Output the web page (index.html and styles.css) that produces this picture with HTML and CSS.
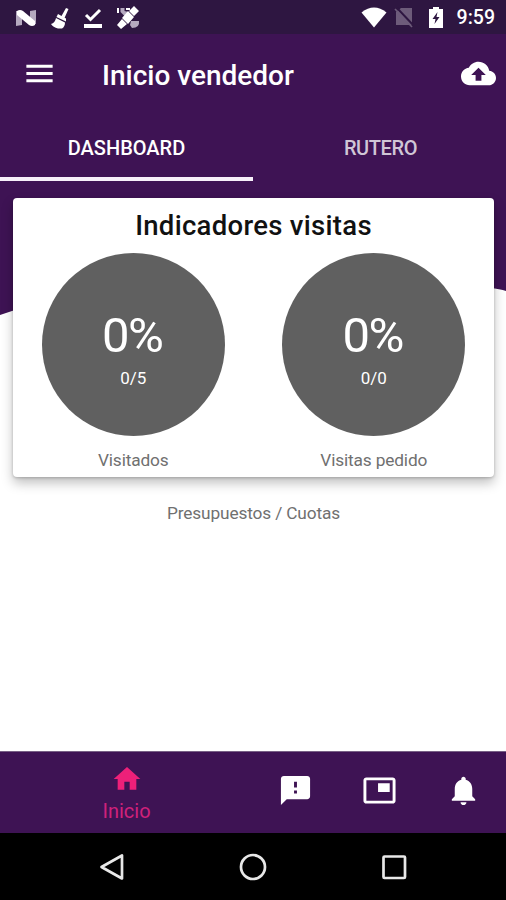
FILE: index.html
```html
<!DOCTYPE html>
<html lang="es">
<head>
    <meta charset="UTF-8">
    <meta name="viewport" content="width=device-width, initial-scale=1.0">
    <title>Inicio vendedor</title>
    <link rel="stylesheet" href="styles.css">
</head>
<body>
    <div class="status-bar">
        <div class="status-left">
            <svg width="22" height="20" viewBox="0 0 22 20"><path fill="#b5a9bf" d="M1 3h6v14l-6 1zM15 3l6-1v14l-6 1z"/><path fill="#fff" d="M2 3q3-2 6 0l12 10v4q-3 2-6 0L2 7z"/></svg>
            <svg width="20" height="22" viewBox="0 0 20 22"><path fill="#fff" d="M16 1l2.500 1-4 9-3-2zM8 7l8 4.500v3L6.500 10zM6 11l9 4.500q0 4-3 6H8Q3 20 1 17q4-1 5-6z"/></svg>
            <svg width="20" height="22" viewBox="0 0 20 22"><path fill="none" stroke="#fff" stroke-width="3" d="M3 8l4.500 4.500L17 3"/><path fill="#fff" d="M1 17h18v4H1z"/></svg>
            <svg width="24" height="24" viewBox="0 0 24 24"><path fill="#b5a9bf" d="M4.500 2h4v3l4 1-4 4-4-4zM15 15l8 0q1 7-7 7l-2-3z"/><path fill="#fff" d="M1 2h2v5H1zM10 2h4v2h-4zM18 0l5 5-5 5-5-5zM12 5l6 6-6 7-6-6zM6 13l5 5-6 5-4-4z"/></svg>
        </div>
        <div class="status-right">
            <svg width="26" height="21" viewBox="0 0 26 21"><path fill="#fff" d="M0.500 5.500Q13-4.500 25.500 5.500L13 20.500z"/></svg>
            <svg class="no-sim" width="20" height="21" viewBox="0 0 20 21"><path fill="#6d5b7a" d="M7 1h11v17H2V5z"/><path stroke="#2e1641" stroke-width="2" d="M3 1l17 18"/><path stroke="#6d5b7a" stroke-width="1.700" d="M1 2l17 18"/></svg>
            <svg width="16" height="21" viewBox="0 0 16 21"><path fill="#fff" fill-rule="evenodd" d="M5 0h6v2h4v19H1V2h4zM9.500 5l-5 7h3L6.500 17l5-7H8.500z"/></svg>
            <span class="clock">9:59</span>
        </div>
    </div>

    <div class="header">
        <svg width="35" height="35" viewBox="0 0 24 24"><path fill="#fff" d="M3 18h18v-2H3v2zm0-5h18v-2H3v2zm0-7v2h18V6H3z"/></svg>
        <h1>Inicio vendedor</h1>
        <svg width="35" height="35" viewBox="0 0 24 24"><path fill="#fff" d="M19.350 10.040C18.670 6.590 15.640 4 12 4 9.110 4 6.600 5.640 5.350 8.040 2.340 8.360 0 10.910 0 14c0 3.310 2.690 6 6 6h13c2.760 0 5-2.240 5-5 0-2.640-2.050-4.780-4.650-4.960zM14 13v4h-4v-4H7l5-5 5 5h-3z"/></svg>
    </div>

    <div class="tabs">
        <div class="tab active">DASHBOARD</div>
        <div class="tab rutero">RUTERO</div>
    </div>

    <div class="content">
        <svg class="wave" width="506" height="140" viewBox="0 0 506 140"><path fill="#3e1354" d="M0 0h506v110Q500 108 490 107C360 90 250 205 130 125Q70 110 12 130L0 134z"/></svg>
        <div class="card">
            <h2>Indicadores visitas</h2>
            <div class="indicadores">
                <div class="indicador">
                    <div class="circulo">
                        <span class="porcentaje">0%</span>
                        <span class="total">0/5</span>
                    </div>
                    <p>Visitados</p>
                </div>
                <div class="indicador">
                    <div class="circulo">
                        <span class="porcentaje">0%</span>
                        <span class="total">0/0</span>
                    </div>
                    <p>Visitas pedido</p>
                </div>
            </div>
        </div>
        <p class="presupuestos">Presupuestos / Cuotas</p>
    </div>

    <div class="bottom-nav">
        <div class="nav-item active">
            <svg width="32" height="32" viewBox="0 0 24 24"><path fill="#ed2079" d="M10 20v-6h4v6h5v-8h3L12 3 2 12h3v8z"/></svg>
            <span>Inicio</span>
        </div>
        <div class="nav-item">
            <svg width="35" height="35" viewBox="0 0 24 24"><path fill="#fff" d="M20 2H4c-1.100 0-1.990.900-1.990 2L2 22l4-4h14c1.100 0 2-.900 2-2V4c0-1.100-.900-2-2-2zm-7 12h-2v-2h2v2zm0-4h-2V6h2v4z"/></svg>
        </div>
        <div class="nav-item">
            <svg width="35" height="35" viewBox="0 0 24 24"><path fill="#fff" d="M19 7h-8v6h8V7zm2-4H3c-1.100 0-2 .900-2 2v14c0 1.100.900 1.980 2 1.980h18c1.100 0 2-.880 2-1.980V5c0-1.100-.900-2-2-2zm0 16.010H3V4.980h18v14.030z"/></svg>
        </div>
        <div class="nav-item">
            <svg width="35" height="35" viewBox="0 0 24 24"><path fill="#fff" d="M12 22c1.100 0 2-.900 2-2h-4c0 1.100.890 2 2 2zm6-6v-5c0-3.070-1.640-5.640-4.500-6.320V4c0-.830-.670-1.500-1.500-1.500s-1.500.670-1.500 1.500v.680C7.630 5.360 6 7.920 6 11v5l-2 2v1h16v-1l-2-2z"/></svg>
        </div>
    </div>

    <div class="android-nav">
        <svg width="28" height="28" viewBox="0 0 28 28"><path d="M24 2.500v23L3.500 14z"/></svg>
        <svg width="28" height="28" viewBox="0 0 28 28"><circle cx="14" cy="14" r="12"/></svg>
        <svg width="28" height="28" viewBox="0 0 28 28"><rect x="3.500" y="3.500" width="21.500" height="21.500" rx="1"/></svg>
    </div>
</body>
</html>
```

FILE: styles.css
```css
* {
    box-sizing: border-box;
}
body {
    font-family: Roboto, Arial, sans-serif;
    margin: 0;
    height: 900px;
    display: flex;
    flex-direction: column;
    background: white;
    overflow: hidden;
}
svg {
    display: block;
    flex-shrink: 0;
}
h1, h2, p {
    margin: 0;
}
.status-bar {
    height: 34px;
    background-color: #2e1641;
    display: flex;
    justify-content: space-between;
    align-items: center;
    padding: 0 11px 0 15px;
}
.status-left {
    display: flex;
    align-items: center;
    gap: 13px;
    padding-top: 1px;
}
.status-right {
    display: flex;
    align-items: center;
    gap: 13px;
}
.no-sim {
    margin-left: -6px;
    margin-right: 1px;
}
.clock {
    color: white;
    font-size: 19.5px;
    font-weight: 500;
    line-height: 34px;
    padding-top: 2px;
}
.header {
    height: 81px;
    background-color: #3e1354;
    display: flex;
    align-items: center;
    padding: 0 10px 2px 22px;
}
.header h1 {
    flex: 1;
    margin-left: 45px;
    padding-top: 4px;
    color: white;
    font-size: 28px;
    font-weight: 500;
}
.tabs {
    height: 66px;
    background-color: #3e1354;
    display: flex;
}
.tab {
    width: 50%;
    text-align: center;
    color: #d0c6d6;
    font-size: 20px;
    font-weight: 500;
    line-height: 66px;
}
.tab.active {
    color: white;
    border-bottom: 4px solid #f7f0fa;
}
.tab.rutero {
    padding-left: 2px;
    letter-spacing: -0.4px;
}
.content {
    flex: 1;
    position: relative;
    padding: 17px 12px 0 13px;
}
/* fondo morado detrás de la tarjeta */
.wave {
    position: absolute;
    top: 0;
    left: 0;
}
.card {
    position: relative;
    height: 279px;
    background: white;
    border-radius: 4px;
    box-shadow: 0 6px 12px rgba(0, 0, 0, 0.25), 0 1px 3px rgba(0, 0, 0, 0.2);
    text-align: center;
}
.card h2 {
    color: #111;
    font-size: 27.5px;
    font-weight: 500;
    line-height: 55px;
    letter-spacing: 0.3px;
}
.indicadores {
    display: flex;
}
.indicador {
    width: 50%;
    display: flex;
    flex-direction: column;
    align-items: center;
}
.circulo {
    width: 183px;
    height: 183px;
    border-radius: 50%;
    background: #606060;
    color: white;
    display: flex;
    flex-direction: column;
    align-items: center;
}
.porcentaje {
    font-size: 49px;
    line-height: 56px;
    margin-top: 55px;
    padding-right: 2px;
    letter-spacing: -1.5px;
}
.total {
    font-size: 17px;
    line-height: 20px;
    margin-top: 4px;
}
.indicador p, .presupuestos {
    color: #707070;
    font-size: 17.3px;
    line-height: 20px;
    letter-spacing: -0.15px;
}
.indicador p {
    margin-top: 14px;
}
.presupuestos {
    text-align: center;
    margin-top: 26px;
}
.bottom-nav {
    height: 82px;
    background-color: #3e1354;
    border-top: 1px solid #776085;
    display: flex;
}
.nav-item {
    flex: 1;
    display: flex;
    flex-direction: column;
    align-items: center;
    padding-top: 21px;
}
.nav-item.active {
    flex: 3;
    padding-top: 11px;
}
.nav-item span {
    color: #d0217b;
    font-size: 20px;
    line-height: 24px;
    margin-top: 4px;
}
.android-nav {
    height: 67px;
    background: black;
    display: flex;
    justify-content: center;
    align-items: center;
    gap: 113px;
}
.android-nav path, .android-nav circle, .android-nav rect {
    fill: none;
    stroke: #e8e8e8;
    stroke-width: 2.7;
    stroke-linejoin: round;
}
```
